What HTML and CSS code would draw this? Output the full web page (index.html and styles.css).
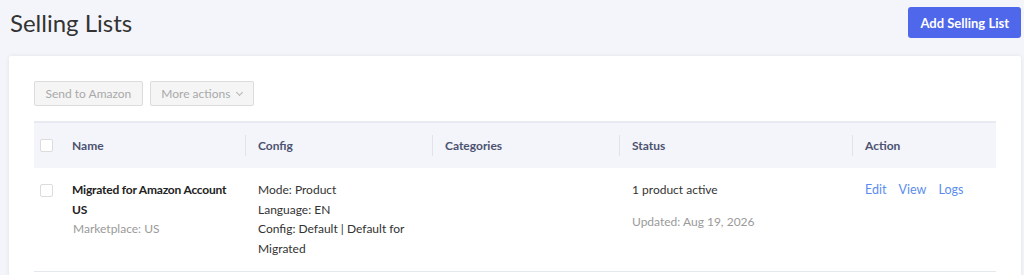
FILE: index.html
```html
<!DOCTYPE html>
<html lang="en">
<head>
    <meta charset="UTF-8">
    <title>Selling Lists</title>
    <link rel="stylesheet" href="styles.css">
</head>
<body>
    <div class="page">
        <!-- Page title and main action -->
        <div class="page-header">
            <h1>Selling Lists</h1>
            <button class="btn-primary">Add Selling List</button>
        </div>

        <div class="card">
            <!-- Bulk actions -->
            <div class="toolbar">
                <button class="btn-muted" disabled>Send to Amazon</button>
                <button class="btn-muted" disabled>More actions <span class="caret"></span></button>
            </div>

            <table class="lists">
                <colgroup>
                    <col class="col-check">
                    <col class="col-name">
                    <col class="col-config">
                    <col class="col-cats">
                    <col class="col-status">
                    <col class="col-action">
                </colgroup>
                <thead>
                    <tr>
                        <th class="check"><span class="checkbox"></span></th>
                        <th>Name</th>
                        <th class="divided">Config</th>
                        <th class="divided">Categories</th>
                        <th class="divided">Status</th>
                        <th class="divided">Action</th>
                    </tr>
                </thead>
                <tbody>
                    <tr>
                        <td class="check"><span class="checkbox"></span></td>
                        <td>
                            <div class="list-name">Migrated for Amazon Account US</div>
                            <div class="muted">Marketplace: US</div>
                        </td>
                        <td>
                            <div>Mode: Product</div>
                            <div>Language: EN</div>
                            <div>Config: Default | Default for Migrated</div>
                        </td>
                        <td></td>
                        <td>
                            <div>1 product active</div>
                            <div class="muted updated">Updated: Aug 19, 2026</div>
                        </td>
                        <td class="actions">
                            <a href="#">Edit</a>
                            <a href="#">View</a>
                            <a href="#">Logs</a>
                        </td>
                    </tr>
                </tbody>
            </table>
        </div>
    </div>
</body>
</html>
```
FILE: styles.css
```css
* {
    box-sizing: border-box;
}
body {
    margin: 0;
    background: #f4f5fa;
    font-family: Lato, "Open Sans", sans-serif;
    font-size: 12px;
    color: #333;
}
.page {
    padding: 7px 3px 0 9px;
}
/* Header */
.page-header {
    display: flex;
    justify-content: space-between;
    align-items: center;
}
h1 {
    margin: 0 0 0 1px;
    font-size: 24px;
    font-weight: 400;
    color: #333;
}
.btn-primary {
    height: 31px;
    padding: 0 12px;
    border: none;
    border-radius: 3px;
    background: #4f67eb;
    color: #fff;
    font-family: inherit;
    font-size: 13px;
    font-weight: 700;
}
/* Card */
.card {
    margin-top: 18px;
    padding: 25px 25px 0;
    background: #fff;
    border-radius: 2px;
    box-shadow: 0 0 4px rgba(0, 0, 0, 0.08);
    min-height: 230px;
}
.toolbar {
    display: flex;
    gap: 7px;
}
.btn-muted {
    height: 25px;
    padding: 0 10.5px;
    background: #f5f5f5;
    border: 1px solid #dcdcdc;
    border-radius: 2px;
    color: #a9a9a9;
    font-family: inherit;
    font-size: 12px;
}
.caret {
    display: inline-block;
    width: 5px;
    height: 5px;
    margin: 0 0 3px 4px;
    border-right: 1px solid #b5b5b5;
    border-bottom: 1px solid #b5b5b5;
    transform: rotate(45deg);
}
/* Table */
.lists {
    width: 100%;
    margin-top: 15px;
    border-collapse: collapse;
    table-layout: fixed;
}
.col-check { width: 26px; }
.col-name { width: 185px; }
.col-config { width: 187px; }
.col-cats { width: 187px; }
.col-status { width: 233px; }
.col-action { width: 144px; }
th {
    position: relative;
    height: 46px;
    padding: 0 13px 1px 12px;
    background: #f4f5fa;
    border-top: 2px solid #e8e9f1;
    color: #4b5270;
    font-weight: 700;
    text-align: left;
}
th.divided {
    padding-left: 13px;
}
th.divided::before {
    content: "";
    position: absolute;
    left: 0;
    top: 12px;
    bottom: 12px;
    width: 1px;
    background: #e2e3ea;
}
td {
    padding: 12px 13px 12px;
    vertical-align: top;
    line-height: 19.7px;
    border-bottom: 1px solid #e5e7ef;
}
th.check, td.check {
    padding: 0 0 0 6px;
}
td.check {
    padding-top: 16px;
}
.checkbox {
    display: block;
    width: 13px;
    height: 13px;
    border: 1px solid #dcdcdc;
    border-radius: 2px;
    background: #fff;
}
.list-name {
    margin-left: -1px;
    font-weight: 700;
    color: #222;
    letter-spacing: -0.2px;
}
.muted {
    color: #9a9a9a;
}
.updated {
    margin-top: 12px;
}
.actions a {
    color: #5b8def;
    text-decoration: none;
    margin-right: 9px;
    font-size: 12.5px;
}
```
